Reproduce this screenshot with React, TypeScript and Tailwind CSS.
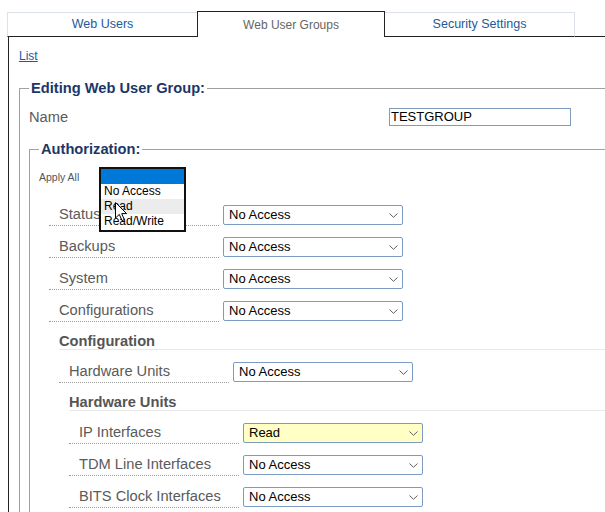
import React from "react"

const font = { fontFamily: '"Liberation Sans", Arial, Helvetica, sans-serif' }

function Chevron() {
  return (
    <svg width="9" height="5" viewBox="0 0 9 5" className="shrink-0">
      <polyline points="0.5,0.5 4.5,4.3 8.5,0.5" fill="none" stroke="#5f5f5f" strokeWidth="1" />
    </svg>
  )
}

function FakeSelect({ value, highlight }: { value: string; highlight?: boolean }) {
  return (
    <div
      className={`ml-[4px] flex h-[20px] w-[180px] items-center justify-between rounded-[2px] border border-[#7b9bc3] pl-[5px] pr-[4px] text-[13px] leading-[18px] text-black ${
        highlight ? "bg-[#ffffc6]" : "bg-white"
      }`}
    >
      <span>{value}</span>
      <Chevron />
    </div>
  )
}

function Row({ label, value = "No Access", highlight }: { label: string; value?: string; highlight?: boolean }) {
  return (
    <div className="flex h-[32px] pt-[6px]">
      <div className="h-[21px] w-[170px] border-b border-dotted border-[#9a9a9a] pl-[10px] text-[14.67px] leading-[19px] text-[#5a5a5a]">
        {label}
      </div>
      <FakeSelect value={value} highlight={highlight} />
    </div>
  )
}

function GroupHeading({ children }: { children: React.ReactNode }) {
  return (
    <div className="mb-[6px] h-[23px] border-b border-[#e8e8e8] pt-[6px] text-[14.67px] font-bold leading-[16px] text-[#555]">
      {children}
    </div>
  )
}

function Tab({ label, active, first }: { label: string; active?: boolean; first?: boolean }) {
  if (active) {
    return (
      <div className="flex h-[26px] w-[188px] items-center justify-center border-x border-t border-[#222] text-[12px] text-[#666]">
        {label}
      </div>
    )
  }
  return (
    <div
      className={`mt-[1px] flex h-[25px] w-[190px] items-center justify-center border-t border-b border-[#dde1e8] border-b-[#222] text-[12.5px] text-[#22599c] ${
        first ? "border-l" : "border-r"
      }`}
    >
      {label}
    </div>
  )
}

function ApplyAllPopup() {
  return (
    <div className="absolute left-[69px] top-[-3px] w-[87px] border-2 border-[#111] bg-white text-[12px] leading-[15px] text-black">
      <div className="h-[15px] bg-[#0078d7]" />
      <div className="h-[15px] pl-[3px]">No Access</div>
      <div className="h-[15px] bg-[#ececec] pl-[3px]">Read</div>
      <div className="h-[16px] pl-[3px]">Read/Write</div>
      <svg width="13" height="20" viewBox="0 0 13 20" className="absolute left-[14px] top-[33px]">
        <path d="M0.5 0.5 L0.5 16 L4.3 12.4 L7 18.6 L9.3 17.6 L6.7 11.6 L11.6 11.6 Z" fill="#fff" stroke="#000" strokeWidth="1" />
      </svg>
    </div>
  )
}

export default function App() {
  return (
    <div className="h-[512px] w-[605px] overflow-hidden bg-white" style={font}>
      {/* tabs */}
      <div className="flex h-[37px] pl-[7px] pt-[11px]">
        <Tab label="Web Users" first />
        <Tab label="Web User Groups" active />
        <Tab label="Security Settings" />
        <div className="mt-[1px] h-[25px] flex-1 border-b border-[#222]" />
      </div>

      <div className="ml-[8px] h-[475px] border-l border-[#222]">
        <div className="pl-[10px] pt-[12px] text-[12px] leading-[14px]">
          <a href="#" className="text-[#1a56a8] underline">List</a>
        </div>

        <fieldset className="ml-[10px] mt-[17px] w-[640px] border border-[#a0a0a0]">
          <legend className="ml-[9px] px-[2px] text-[14.67px] font-bold leading-[16px] text-[#1b3768]">
            Editing Web User Group:
          </legend>

          <div className="mt-[12px] flex h-[18px] items-center pl-[9px]">
            <div className="w-[360px] text-[14.67px] text-[#5a5a5a]">Name</div>
            <div className="flex h-[18px] w-[182px] items-center border border-[#7f9cbf] pl-[1px] text-[13px] text-black">
              TESTGROUP
            </div>
          </div>

          <fieldset className="ml-[9px] mt-[15px] w-[620px] border border-[#a0a0a0] pb-[20px]">
            <legend className="ml-[9px] px-[2px] text-[14.67px] font-bold leading-[16px] text-[#1b3768]">
              Authorization:
            </legend>

            <div className="relative mt-[13px] h-[14px] pl-[9px] text-[10.5px] leading-[14px] text-[#555]">
              Apply All
              <ApplyAllPopup />
            </div>

            <div className="ml-[19px] mt-[15px] flex flex-col">
              <Row label="Status" />
              <Row label="Backups" />
              <Row label="System" />
              <Row label="Configurations" />

              <div className="ml-[10px] flex flex-col">
                <GroupHeading>Configuration</GroupHeading>
                <Row label="Hardware Units" />

                <div className="ml-[10px] flex flex-col">
                  <GroupHeading>Hardware Units</GroupHeading>
                  <Row label="IP Interfaces" value="Read" highlight />
                  <Row label="TDM Line Interfaces" />
                  <Row label="BITS Clock Interfaces" />
                </div>
              </div>
            </div>
          </fieldset>
        </fieldset>
      </div>
    </div>
  )
}
